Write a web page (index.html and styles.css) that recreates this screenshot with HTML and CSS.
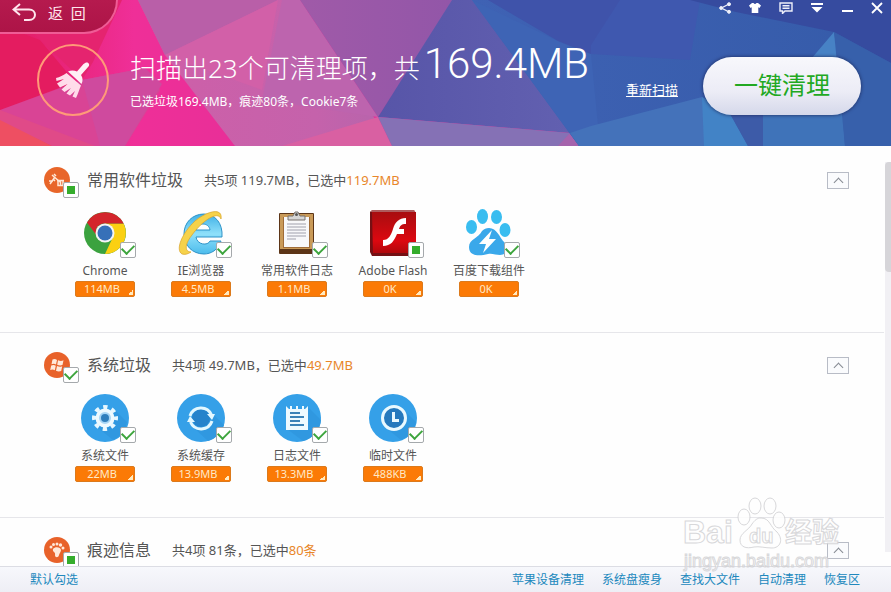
FILE: index.html
```html
<!DOCTYPE html>
<html lang="zh-CN">
<head>
    <meta charset="UTF-8">
    <meta name="viewport" content="width=device-width, initial-scale=1.0">
    <title>一键清理</title>
    <link rel="stylesheet" href="styles.css">
</head>
<body>
    <header class="header">
        <svg class="header-bg" viewBox="0 0 891 146" preserveAspectRatio="none" aria-hidden="true">
            <defs>
                <linearGradient id="bg-base" x1="0" x2="1">
                    <stop offset="0" stop-color="#e31b5f"/>
                    <stop offset="0.15" stop-color="#ef2f98"/>
                    <stop offset="0.3" stop-color="#e62f98"/>
                </linearGradient>
                <linearGradient id="bg-pink" x1="0" x2="1">
                    <stop offset="0" stop-color="#cf5fa8"/>
                    <stop offset="0.7" stop-color="#c562ab"/>
                    <stop offset="1" stop-color="#b565ac"/>
                </linearGradient>
                <linearGradient id="bg-purple" x1="0" x2="1">
                    <stop offset="0" stop-color="#a05aa8"/>
                    <stop offset="1" stop-color="#9256a8"/>
                </linearGradient>
                <linearGradient id="bg-violet" x1="0" x2="1">
                    <stop offset="0" stop-color="#5755a8"/>
                    <stop offset="1" stop-color="#6260b0"/>
                </linearGradient>
                <linearGradient id="bg-blue" x1="0" x2="1">
                    <stop offset="0" stop-color="#3f62b4"/>
                    <stop offset="1" stop-color="#355ba9"/>
                </linearGradient>
            </defs>
            <rect width="891" height="146" fill="url(#bg-base)"/>
            <polygon points="0,25 40,40 75,82 0,110" fill="#e41c60"/>
            <polygon points="122,0 93,62 82,80 35,35 60,0" fill="#e5246f"/>
            <polygon points="0,110 82,80 145,68 160,90 125,146 52,146 0,120" fill="#d94495"/>
            <polygon points="82,80 145,68 162,84 125,146 100,146" fill="#cf4a9e"/>
            <polygon points="0,110 0,122 52,146 95,146" fill="#e04a88"/>
            <polygon points="0,120 52,146 0,146" fill="#ee4f62"/>
            <polygon points="138,0 300,0 392,146 235,146 165,55" fill="url(#bg-pink)"/>
            <polygon points="138,0 278,0 165,55" fill="#b95fa8"/>
            <polygon points="165,55 278,0 262,90" fill="#d260a8"/>
            <polygon points="282,0 300,0 378,117 262,100" fill="#bd64ae"/>
            <polygon points="282,146 378,117 392,146" fill="#d960a2"/>
            <polygon points="300,0 454,0 378,117" fill="url(#bg-purple)"/>
            <polygon points="452,0 475,0 570,133 378,117" fill="url(#bg-violet)"/>
            <polygon points="378,117 570,133 579,146 392,146" fill="#8571b5"/>
            <polygon points="570,133 579,146 558,146" fill="#a563ac"/>
            <polygon points="472,0 891,0 891,146 579,146" fill="url(#bg-blue)"/>
            <polygon points="472,0 560,42 591,54 600,146 579,146" fill="#3e64b5"/>
            <polygon points="488,0 650,0 591,54 558,41" fill="#3f53aa"/>
            <polygon points="620,0 700,0 690,60 591,54 591,45" fill="#3f58af"/>
            <polygon points="570,133 591,126 702,97 740,146 579,146" fill="#4472ba"/>
            <polygon points="702,97 728,110 748,146 704,146" fill="#4283c6"/>
            <polygon points="728,110 763,110 763,146 748,146" fill="#3d5ba8"/>
            <polygon points="763,105 842,105 845,146 763,146" fill="#3f73b9"/>
            <polygon points="690,0 891,0 891,63 834,32 736,12" fill="#364b9f"/>
            <polygon points="834,32 842,80 800,72" fill="#4782c5"/>
            <polygon points="834,32 891,63 891,146 845,146" fill="#3760ab"/>
        </svg>

        <div class="topbar">
            <button class="back" type="button">
                <svg width="24" height="20" viewBox="0 0 24 20" fill="none" stroke="#ffe6ee" stroke-width="2">
                    <path d="M8 1 L1.500 6.500 L8 12 M2 6.500 H17 C25 6.500 25 17 17 17 H12"/>
                </svg>
                返&nbsp; 回
            </button>
            <nav class="window-tools">
                <button type="button" aria-label="分享">
                    <svg width="12" height="12" viewBox="0 0 12 12" fill="#eef0fa" stroke="#eef0fa">
                        <path d="M10 2 L2.500 6 L10 10" fill="none" stroke-width="1.300"/>
                        <circle cx="10" cy="2.200" r="1.500"/><circle cx="2.200" cy="6" r="1.500"/><circle cx="10" cy="9.800" r="1.500"/>
                    </svg>
                </button>
                <button type="button" aria-label="换肤">
                    <svg width="12" height="12" viewBox="0 0 12 12" fill="#fff">
                        <path d="M3 1 H4.500 Q6 3 7.500 1 H9 L12 3.500 L10.500 6 L9.300 5.300 V11 H2.700 V5.300 L1.500 6 L0 3.500 Z"/>
                    </svg>
                </button>
                <button type="button" aria-label="反馈">
                    <svg width="14" height="12" viewBox="0 0 14 12" fill="none" stroke="#eef0fa" stroke-width="1.400">
                        <path d="M1 1 H13 V9 H6 L3.500 11.500 V9 H1 Z M3.500 3.700 H10.500 M3.500 6.300 H10.500"/>
                    </svg>
                </button>
                <button type="button" aria-label="菜单">
                    <svg width="12" height="12" viewBox="0 0 12 12" fill="#fff">
                        <path d="M0 1 H12 V3 H0 Z M0.500 5 H11.500 L6 10.500 Z"/>
                    </svg>
                </button>
                <button type="button" aria-label="最小化">
                    <svg width="12" height="12" viewBox="0 0 12 12" fill="#fff"><path d="M1 8 H12 V10 H1 Z"/></svg>
                </button>
                <button type="button" aria-label="关闭">
                    <svg width="12" height="12" viewBox="0 0 12 12" stroke="#fff" stroke-width="1.800"><path d="M1 1 L11 11 M11 1 L1 11"/></svg>
                </button>
            </nav>
        </div>

        <div class="hero">
            <div class="hero-icon">
                <svg width="36" height="38" viewBox="0 0 36 38">
                    <path d="M31 1.500 C34 1 35 4 33.500 5.500 L26 14 C28 17 28 20 26.500 23 L13 10.500 C16 9 19 9 22 10.500 L28.500 3 Z" fill="#fff0f5"/>
                    <path d="M11.500 12 L26 24.500 C24 29 23 33 21 37 L17.500 35.500 L20 30 L15 34.500 L11.500 32.500 L16 27 L9.500 31 L6.500 28.500 L12.500 23 L5 26.500 L2 22.500 L9 18 L1.500 20 L1 17 C5 16 8 14.500 11.500 12 Z" fill="#ffdcea"/>
                </svg>
            </div>
            <div class="hero-text">
                <h1>扫描出23个可清理项，共<span class="total">169.4MB</span></h1>
                <p>已选垃圾169.4MB，痕迹80条，Cookie7条</p>
            </div>
            <a class="rescan" href="#">重新扫描</a>
            <button class="clean" type="button">一键清理</button>
        </div>
    </header>

    <main class="main">
        <div class="list">
            <section class="group">
                <div class="group-head">
                    <label class="group-icon">
                        <svg width="26" height="26" viewBox="0 0 26 26">
                            <circle cx="13" cy="13" r="13" fill="#e8662a"/>
                            <g fill="none" stroke="#ffe9d8" stroke-width="1.500">
                                <path d="M6 17 L11 10 M8 8 L16 15 M9 12 L11 14 M10 7 L12 9 M5 14 H9"/>
                                <path d="M13 13.500 H20 M14 14 V18.500 H19 V14 M16.500 14 V18"/>
                            </g>
                        </svg>
                        <input class="check partial" type="checkbox" aria-label="常用软件垃圾">
                    </label>
                    <h2>常用软件垃圾</h2>
                    <p>共5项 119.7MB，已选中<em>119.7MB</em></p>
                    <button class="fold" type="button" aria-label="收起"></button>
                </div>
                <ul class="items">
                    <li>
                        <label>
                            <span class="pic">
                                <svg width="48" height="48" viewBox="0 0 48 48">
                                    <circle cx="24" cy="24" r="21" fill="#3ba23f"/>
                                    <path d="M24 24 L32 28 L24 45 A21 21 0 0 0 42.500 14.500 H24 Z" fill="#fbd012"/>
                                    <path d="M6 13.500 A21 21 0 0 1 42.700 14.500 H24 A10 10 0 0 0 15 20 L16 27 Z" fill="#d3252b"/>
                                    <circle cx="24" cy="24" r="9.500" fill="#f4f4f4"/>
                                    <circle cx="24" cy="24" r="7.500" fill="#3670b8"/>
                                </svg>
                                <input class="check" type="checkbox" checked>
                            </span>
                            Chrome
                        </label>
                        <button class="size" type="button">114MB</button>
                    </li>
                    <li>
                        <label>
                            <span class="pic">
                                <svg width="48" height="48" viewBox="0 0 48 48">
                                    <defs>
                                        <linearGradient id="ie" x2="0" y2="1">
                                            <stop offset="0" stop-color="#3fb0e6"/>
                                            <stop offset="0.500" stop-color="#8fe0fa"/>
                                            <stop offset="1" stop-color="#4cbcec"/>
                                        </linearGradient>
                                    </defs>
                                    <path d="M27 5 C38 5 46 14 45 28 H19 C20 36 31 37 33 32 H44 C41 41 34 45 27 45 C15 45 7 36 7 25 C7 14 15 5 27 5 Z M19 21 H33 C32 13 20 13 19 21 Z" fill="url(#ie)" fill-rule="evenodd" stroke="#2f93c8"/>
                                    <path d="M44 10 C46 -2 30 2 18 12 C5 24 -2 41 5 45 C8 46 11 45 14 43 C8 43 7 36 15 26 C25 12 41 1 44 10 Z" fill="#f6d24a" stroke="#d9a42a" stroke-width="0.700"/>
                                </svg>
                                <input class="check" type="checkbox" checked>
                            </span>
                            IE浏览器
                        </label>
                        <button class="size" type="button">4.5MB</button>
                    </li>
                    <li>
                        <label>
                            <span class="pic">
                                <svg width="48" height="48" viewBox="0 0 48 48">
                                    <rect x="6" y="4" width="35" height="41" rx="1" fill="#5c3517"/>
                                    <rect x="7" y="5" width="33" height="35" fill="#c99a58"/>
                                    <rect x="10" y="8" width="27" height="31" fill="#a06c38"/>
                                    <rect x="11" y="8" width="25" height="30" fill="#f8f8fa"/>
                                    <path d="M14 15 H33 M14 18 H33 M14 21 H33 M14 24 H33 M14 27 H33 M14 30 H23" stroke="#a0a0ac"/>
                                    <path d="M15 11 V7 H20 L22 3 H25 L27 7 H32 V11 Z" fill="#d6d6d6" stroke="#77716c"/>
                                    <circle cx="23.500" cy="5.500" r="1.500" fill="#555"/>
                                </svg>
                                <input class="check" type="checkbox" checked>
                            </span>
                            常用软件日志
                        </label>
                        <button class="size" type="button">1.1MB</button>
                    </li>
                    <li>
                        <label>
                            <span class="pic">
                                <svg width="48" height="48" viewBox="0 0 48 48">
                                    <defs>
                                        <linearGradient id="flash" x2="0" y2="1">
                                            <stop offset="0" stop-color="#a80d10"/>
                                            <stop offset="0.700" stop-color="#dc0810"/>
                                            <stop offset="1" stop-color="#b0080c"/>
                                        </linearGradient>
                                    </defs>
                                    <path d="M1 3 L3 1 H45 L47 4 V44 L44 47 H3 L1 43 Z" fill="#751014"/>
                                    <path d="M3 3 H47 V44 H4 Z" fill="url(#flash)"/>
                                    <path d="M2 2 H46" stroke="#e7a7a7"/>
                                    <path d="M37 9 V15 C32 15 31 17 30 20 H35 V25 H28 C25 32 22 37 14 37 V31 C20 31 22 26 24 20 C26 13 30 9 37 9 Z" fill="#fff"/>
                                </svg>
                                <input class="check partial" type="checkbox">
                            </span>
                            Adobe Flash
                        </label>
                        <button class="size" type="button">0K</button>
                    </li>
                    <li>
                        <label>
                            <span class="pic">
                                <svg width="48" height="48" viewBox="0 0 48 48">
                                    <g fill="#39bdf0">
                                        <ellipse cx="6.500" cy="18" rx="5.500" ry="7"/>
                                        <ellipse cx="17.500" cy="7.500" rx="5.500" ry="7.500"/>
                                        <ellipse cx="31.500" cy="8" rx="5.500" ry="7"/>
                                        <ellipse cx="40" cy="21" rx="5.500" ry="7"/>
                                    </g>
                                    <path d="M24 19 C32 19 34 28 40 34 C45 40 41 46 35 46 C31 46 27 44 23 45 C15 47 4 48 4 38 C4 30 14 29 17 22 C19 20 21 19 24 19 Z" fill="#3aa8ea"/>
                                    <path d="M27 21 L14 35 H21 L18 44 L31 30 H24 Z" fill="#fff"/>
                                </svg>
                                <input class="check" type="checkbox" checked>
                            </span>
                            百度下载组件
                        </label>
                        <button class="size" type="button">0K</button>
                    </li>
                </ul>
            </section>

            <section class="group">
                <div class="group-head">
                    <label class="group-icon">
                        <svg width="26" height="26" viewBox="0 0 26 26">
                            <circle cx="13" cy="13" r="13" fill="#e8622a"/>
                            <path d="M8.500 7.500 Q11 6.500 13 8 L12 12.500 Q10 11.300 7.500 12.300 Z M14 8.300 Q17 9.500 19.500 8.300 L18.500 13 Q16 14 13.200 12.800 Z M7.200 13.500 Q9.700 12.500 11.800 13.700 L10.800 18.200 Q8.500 17 6.200 18 Z M13 14 Q15.500 15.300 18.200 14.200 L17.200 19 Q14.500 20 12 18.700 Z" fill="#ffe9da"/>
                        </svg>
                        <input class="check" type="checkbox" aria-label="系统垃圾" checked>
                    </label>
                    <h2>系统垃圾</h2>
                    <p>共4项 49.7MB，已选中<em>49.7MB</em></p>
                    <button class="fold" type="button" aria-label="收起"></button>
                </div>
                <ul class="items">
                    <li>
                        <label>
                            <span class="pic">
                                <svg width="48" height="48" viewBox="0 0 48 48">
                                    <circle cx="24" cy="24" r="24" fill="#35a0e8"/>
                                    <path d="M33 15 L46 28 A24 24 0 0 1 32 46 L16 33 Z" fill="#3098e0"/>
                                    <circle cx="24" cy="24" r="11" fill="none" stroke="#e8f8ff" stroke-width="4" stroke-dasharray="4.320 4.320" stroke-dashoffset="2.160"/>
                                    <circle cx="24" cy="24" r="9.500" fill="#eefaff"/>
                                    <circle cx="24" cy="24" r="5" fill="#2f7fbd" stroke="#a6d5f5" stroke-width="2"/>
                                </svg>
                                <input class="check" type="checkbox" checked>
                            </span>
                            系统文件
                        </label>
                        <button class="size" type="button">22MB</button>
                    </li>
                    <li>
                        <label>
                            <span class="pic">
                                <svg width="48" height="48" viewBox="0 0 48 48">
                                    <circle cx="24" cy="24" r="24" fill="#35a0e8"/>
                                    <path d="M36 20 L47 31 A24 24 0 0 1 31 47 L16 33 Z" fill="#3098e0"/>
                                    <circle cx="24" cy="24" r="9" fill="#2583cb"/>
                                    <path d="M13 22 A11.500 11.500 0 0 1 34.500 21 M35 27 A11.500 11.500 0 0 1 13.500 28" fill="none" stroke="#e3f8ff" stroke-width="3"/>
                                    <path d="M30 20 H38 L35 26 Z M10 28 H18 L13 22 Z" fill="#e3f8ff"/>
                                </svg>
                                <input class="check" type="checkbox" checked>
                            </span>
                            系统缓存
                        </label>
                        <button class="size" type="button">13.9MB</button>
                    </li>
                    <li>
                        <label>
                            <span class="pic">
                                <svg width="48" height="48" viewBox="0 0 48 48">
                                    <circle cx="24" cy="24" r="24" fill="#35a0e8"/>
                                    <path d="M34 12 L48 26 A24 24 0 0 1 30 47 L14 35 Z" fill="#3098e0"/>
                                    <path d="M13 12 L16 15 H17 V12 H19 V15 H23 V12 H25 V15 H29 V12 H31 V15 H32 L35 12 V36 H13 Z" fill="#eefaff"/>
                                    <path d="M17 19 H27 M17 23 H31 M17 27 H27 M17 31 H31" stroke="#3b83b8" stroke-width="2"/>
                                </svg>
                                <input class="check" type="checkbox" checked>
                            </span>
                            日志文件
                        </label>
                        <button class="size" type="button">13.3MB</button>
                    </li>
                    <li>
                        <label>
                            <span class="pic">
                                <svg width="48" height="48" viewBox="0 0 48 48">
                                    <circle cx="24" cy="24" r="24" fill="#35a0e8"/>
                                    <path d="M34 15 L47 28 A24 24 0 0 1 32 46 L16 33 Z" fill="#3098e0"/>
                                    <circle cx="25" cy="24" r="11.500" fill="#2579bd" stroke="#e9f9ff" stroke-width="3"/>
                                    <path d="M24.500 18 V26.500 H30" fill="none" stroke="#e9f9ff" stroke-width="3"/>
                                </svg>
                                <input class="check" type="checkbox" checked>
                            </span>
                            临时文件
                        </label>
                        <button class="size" type="button">488KB</button>
                    </li>
                </ul>
            </section>

            <section class="group">
                <div class="group-head">
                    <label class="group-icon">
                        <svg width="26" height="26" viewBox="0 0 26 26">
                            <circle cx="13" cy="13" r="13" fill="#e8622a"/>
                            <g fill="#ffe9da">
                                <circle cx="7" cy="10" r="1.500"/><circle cx="9.500" cy="7.500" r="1.500"/><circle cx="13" cy="7" r="1.500"/><circle cx="16.500" cy="8" r="1.700"/><circle cx="19" cy="11" r="1.500"/>
                                <path d="M9 12 C11 9 17 10 17 13 C17 15 15.500 16 15 18 C14.500 21 11 21 11 18 C12 15 8 15 9 12 Z"/>
                            </g>
                        </svg>
                        <input class="check partial" type="checkbox" aria-label="痕迹信息">
                    </label>
                    <h2>痕迹信息</h2>
                    <p>共4项 81条，已选中<em>80条</em></p>
                    <button class="fold" type="button" aria-label="收起"></button>
                </div>
            </section>
        </div>
        <div class="scrollbar"><div class="thumb"></div></div>
    </main>

    <footer class="footer">
        <a class="default" href="#">默认勾选</a>
        <a href="#">苹果设备清理</a>
        <a href="#">系统盘瘦身</a>
        <a href="#">查找大文件</a>
        <a href="#">自动清理</a>
        <a href="#">恢复区</a>
    </footer>

    <svg class="watermark" width="164" height="80" viewBox="0 0 164 80" aria-hidden="true">
        <g fill="#fff" stroke="#cfcfd2" stroke-width="1">
            <text class="mark-big" x="1" y="47">Bai</text>
            <ellipse cx="62" cy="21" rx="6" ry="8"/>
            <ellipse cx="73" cy="10" rx="6" ry="8"/>
            <ellipse cx="88" cy="10" rx="6" ry="8"/>
            <ellipse cx="97" cy="24" rx="6" ry="8"/>
            <path d="M79 22 C88 22 88 31 95 36 C102 44 98 52 90 52 C83 52 77 50 72 51 C64 53 58 51 58 44 C58 37 67 34 70 28 C73 24 75 22 79 22 Z"/>
            <text class="mark-du" x="67" y="47">du</text>
            <text class="mark-cn" x="103" y="46">经验</text>
            <text class="mark-url" x="2" y="71">jingyan.baidu.com</text>
        </g>
    </svg>
</body>
</html>
```
FILE: styles.css
```css
* {
    box-sizing: border-box;
}
body {
    margin: 0;
    height: 100vh;
    display: flex;
    flex-direction: column;
    position: relative;
    overflow: hidden;
    background: #fefefe;
    color: #555;
    font-family: "Noto Sans", "Noto Sans CJK SC", sans-serif;
    font-size: 12px;
}
h1, h2, p, ul {
    margin: 0;
    padding: 0;
    font-weight: normal;
}
button {
    font-family: inherit;
    padding: 0;
    border: none;
    background: none;
    cursor: pointer;
}
svg {
    display: block;
}

/* header */
.header {
    position: relative;
    flex: none;
    height: 146px;
    color: #fff;
}
.header-bg {
    position: absolute;
    top: 0;
    left: 0;
    width: 100%;
    height: 100%;
}
.topbar {
    position: relative;
    display: flex;
    justify-content: space-between;
    align-items: flex-start;
}
.back {
    display: flex;
    align-items: center;
    gap: 12px;
    width: 118px;
    height: 34px;
    padding: 0 0 6px 12px;
    color: #ffe6ee;
    font-size: 15px;
    line-height: 20px;
    background: linear-gradient(#b51a4e, #ad1447);
    border-right: 2px solid #ef5c96;
    border-bottom: 2px solid #ef5c96;
    border-bottom-right-radius: 34px;
}
.window-tools {
    display: flex;
    gap: 18px;
    padding: 2px 8px 0 0;
}
.hero {
    position: relative;
    display: flex;
    align-items: center;
    height: 92px;
    padding: 0 30px 0 37px;
}
.hero-icon {
    display: flex;
    align-items: center;
    justify-content: center;
    width: 72px;
    height: 72px;
    border: 2px solid #ff9a78;
    border-radius: 50%;
}
.hero-text {
    flex: 1;
    padding: 0 0 5px 21px;
}
.hero-text h1 {
    font-family: "Noto Sans", "Noto Sans CJK SC", sans-serif;
    font-size: 26px;
    font-weight: 300;
    line-height: 48px;
    white-space: nowrap;
}
.total {
    margin-left: 4px;
    font-family: Roboto, sans-serif;
    font-size: 42px;
    font-weight: 300;
    line-height: 40px;
}
.hero-text p {
    line-height: 20px;
}
.rescan {
    margin-right: 25px;
    padding-top: 20px;
    color: #fff;
    font-size: 13px;
    line-height: 18px;
}
.clean {
    width: 158px;
    height: 58px;
    margin-top: 12px;
    padding-bottom: 5px;
    color: #22a822;
    font-size: 24px;
    border-radius: 29px;
    background: linear-gradient(#f8f8fc, #ececf6 60%, #d5d8ea);
    box-shadow: 0 0 3px 1px rgba(30, 40, 90, 0.6);
}

/* list */
.main {
    flex: 1;
    min-height: 0;
    display: flex;
    overflow: hidden;
}
.list {
    flex: 1;
    padding-top: 2px;
}
.group {
    height: 185px;
    padding: 19px 35px 0 44px;
    border-bottom: 1px solid #e6e6ea;
}
.group-head {
    display: flex;
    align-items: center;
    height: 26px;
}
.group-icon, .pic {
    position: relative;
}
.group-head h2 {
    margin: 0 21px 0 17px;
    font-size: 16px;
    line-height: 24px;
}
.group-head p {
    font-size: 13px;
    line-height: 20px;
}
.group-head em {
    color: #e8862a;
    font-style: normal;
}
.fold {
    display: flex;
    justify-content: center;
    width: 22px;
    height: 17px;
    margin-left: auto;
    padding-top: 6px;
    background: #fafbfd;
    border: 1px solid #b8bcc6;
}
.fold::after {
    content: "";
    width: 6px;
    height: 6px;
    border: solid #858a92;
    border-width: 1px 0 0 1px;
    transform: rotate(45deg);
}
.check {
    position: absolute;
    right: -9px;
    bottom: -5px;
    width: 16px;
    height: 16px;
    margin: 0;
    display: flex;
    align-items: center;
    justify-content: center;
    appearance: none;
    background: #fff;
    border: 1px solid #a5a9ac;
    border-radius: 2px;
}
.pic .check {
    right: -7px;
    bottom: -1px;
}
.check:checked::after {
    content: "";
    flex: none;
    width: 10px;
    height: 6px;
    margin-bottom: 4px;
    border: solid #3da53d;
    border-width: 0 0 2px 2px;
    transform: rotate(-45deg);
}
.check.partial::after {
    content: "";
    width: 8px;
    height: 8px;
    background: #35ad2c;
}
.items {
    display: flex;
    margin-left: 13px;
    padding-top: 16px;
    list-style: none;
}
.items li {
    width: 96px;
    display: flex;
    flex-direction: column;
    align-items: center;
}
.items label {
    display: flex;
    flex-direction: column;
    align-items: center;
    gap: 5px;
    line-height: 18px;
    white-space: nowrap;
}
.size {
    position: relative;
    width: 60px;
    height: 16px;
    margin-top: 1px;
    padding-right: 6px;
    color: #ffe9c8;
    font-size: 11px;
    line-height: 14px;
    background: #fb7a06;
    border: 1px solid #dc7a1c;
    border-radius: 2px;
}
.size::after {
    content: "";
    position: absolute;
    right: 1px;
    bottom: 1px;
    width: 5px;
    height: 5px;
    background: linear-gradient(135deg, transparent 50%, #ffeac0 50%);
}
.scrollbar {
    width: 6px;
    margin: 16px 0 14px 1px;
    background: #f1f0f4;
}
.thumb {
    height: 110px;
    background: #d6d5d9;
    border-radius: 4px 0 0 4px;
}

/* footer */
.footer {
    flex: none;
    display: flex;
    align-items: center;
    gap: 18px;
    height: 26px;
    padding: 1px 31px 0 30px;
    background: linear-gradient(#f7f8fc, #eeeef5);
    border-top: 1px solid #dcdde4;
}
.footer a {
    color: #2088bd;
    line-height: 16px;
    text-decoration: none;
}
.footer .default {
    margin-right: auto;
}

.watermark {
    position: absolute;
    right: 45px;
    bottom: 16px;
    opacity: 0.8;
    pointer-events: none;
}
.mark-big {
    font: bold 32px "Liberation Sans", sans-serif;
}
.mark-du {
    font: bold 20px "Liberation Sans", sans-serif;
}
.mark-cn {
    font: bold 27px "Noto Sans CJK SC", sans-serif;
}
.mark-url {
    font: 18px "Liberation Sans", sans-serif;
}
```
